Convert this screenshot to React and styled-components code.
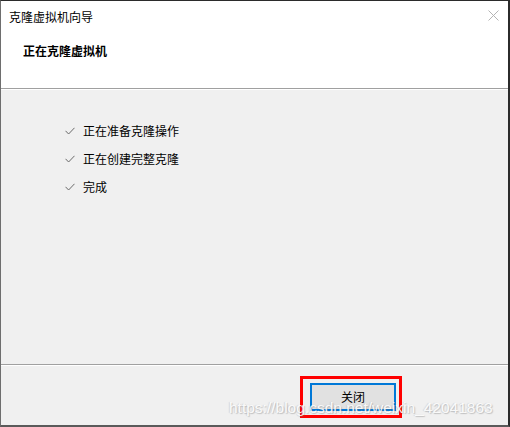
import styled, { createGlobalStyle } from 'styled-components';

const GlobalStyle = createGlobalStyle`
  html, body {
    margin: 0;
    padding: 0;
    background: #ffffff;
  }
  * {
    box-sizing: border-box;
  }
`;

// Window frame
const Window = styled.div`
  position: relative;
  width: 510px;
  height: 427px;
  display: flex;
  flex-direction: column;
  background: #f0f0f0;
  border-top: 1px solid #2b2b2b;
  border-left: 1px solid #6e6e6e;
  border-right: 2px solid #2b2b2b;
  border-bottom: 2px solid #5a5a5a;
  font-family: "Noto Sans CJK SC", "Microsoft YaHei UI", sans-serif;
  font-size: 12px;
  color: #000;
  overflow: hidden;
`;

const TitleBar = styled.div`
  height: 31px;
  display: flex;
  align-items: center;
  justify-content: space-between;
  padding: 0 9px 0 8px;
  background: #ffffff;
`;

const Title = styled.span`
  font-size: 12px;
  line-height: 1;
  margin-top: 1px;
`;

const CloseGlyph = styled.svg`
  width: 11px;
  height: 11px;
  margin-top: -2px;
`;

const Header = styled.div`
  height: 57px;
  background: #ffffff;
  padding: 11px 0 0 22px;
  border-bottom: 1px solid #a0a0a0;
`;

const Subtitle = styled.div`
  font-weight: bold;
  font-size: 12px;
  line-height: 16px;
`;

const Body = styled.div`
  flex: 1;
  padding: 33px 0 0 64px;
  display: flex;
  flex-direction: column;
  gap: 12px;
  border-top: 1px solid #ffffff;
  border-bottom: 1px solid #a0a0a0;
`;

const Step = styled.div`
  display: flex;
  align-items: center;
  gap: 8px;
  height: 16px;
  line-height: 16px;
`;

const Check = styled.svg`
  width: 10px;
  height: 8px;
  flex: none;
`;

const Footer = styled.div`
  height: 60px;
  display: flex;
  justify-content: flex-end;
  align-items: flex-start;
  padding: 10px 106px 0 0;
  border-top: 1px solid #ffffff;
`;

const Highlight = styled.div`
  border: 3px solid #ff0000;
  padding: 4px 3px 4px 7px;
`;

const Button = styled.button`
  width: 86px;
  height: 28px;
  background: #e1e1e1;
  border: 2px solid #0078d7;
  font-family: "Noto Sans CJK SC", "Microsoft YaHei UI", sans-serif;
  font-size: 12px;
  color: #000;
  padding: 0;
  line-height: 1;
`;

const Watermark = styled.div`
  position: absolute;
  left: 228px;
  top: 398px;
  font-family: "Liberation Sans", Arial, sans-serif;
  font-size: 15.5px;
  color: rgba(255, 255, 255, 0.9);
  text-shadow: 1px 1px 1px rgba(110, 110, 110, 0.35), -1px 0 1px rgba(110, 110, 110, 0.2);
  white-space: nowrap;
  pointer-events: none;
`;

const steps = ['正在准备克隆操作', '正在创建完整克隆', '完成'];

const App = () => {
  return (
    <>
      <GlobalStyle />
      <Window>
        <TitleBar>
          <Title>克隆虚拟机向导</Title>
          <CloseGlyph viewBox="0 0 11 11">
            <path d="M0.5 0.5 L10.5 10.5 M10.5 0.5 L0.5 10.5" stroke="#b4b4b4" strokeWidth="1" fill="none" />
          </CloseGlyph>
        </TitleBar>
        <Header>
          <Subtitle>正在克隆虚拟机</Subtitle>
        </Header>
        <Body>
          {steps.map(step => (
            <Step key={step}>
              <Check viewBox="0 0 10 8">
                <path d="M0.5 3.8 L3.6 7 L9.5 0.8" stroke="#6a6a6a" strokeWidth="1" fill="none" />
              </Check>
              {step}
            </Step>
          ))}
        </Body>
        <Footer>
          <Highlight>
            <Button>关闭</Button>
          </Highlight>
        </Footer>
        <Watermark>https://blog.csdn.net/weixin_42041863</Watermark>
      </Window>
    </>
  );
};

export default App;
